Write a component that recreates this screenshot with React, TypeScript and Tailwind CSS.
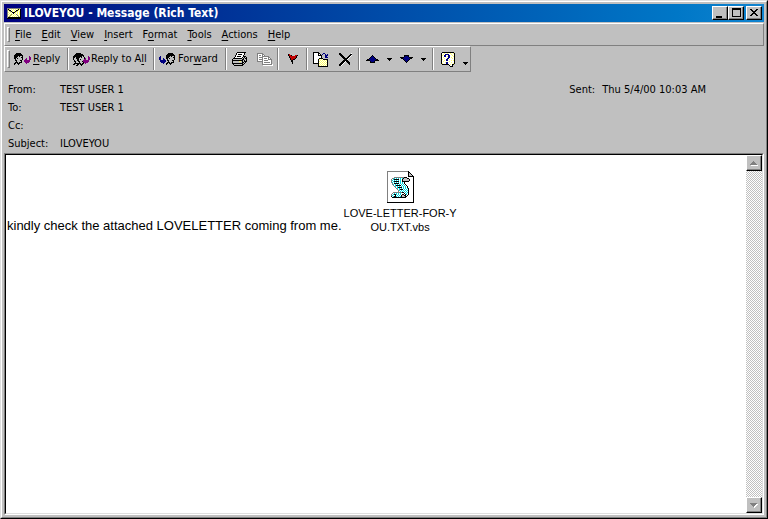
import type { ReactNode } from 'react';

const PALETTE: Record<string, string> = {
  K: '#000000',
  W: '#ffffff',
  G: '#808080',
  L: '#c0c0c0',
  P: '#800080',
  B: '#000080',
  R: '#c00000',
  Y: '#ffff66',
  C: '#00d8e0',
};

const REPLY = [
  '..KKKKK..........',
  '.KKKKKKK.........',
  'KKKKKKKKK........',
  'KKKKLKLLK......P.',
  'KKKLLLLKK......PP',
  'KKLKLLLLK...P..PP',
  '.KLLLLLLK..PP..PP',
  '.KKLLLKK..PPPPPP.',
  '..KLLLLK..PPPPPP.',
  '.KKKLKKK...PPPP..',
  'KK.KKK......P....',
  'K...K............',
];

const REPLY_ALL = [
  '...KKKKK.........',
  '..KKKKKKKK.......',
  '.KKKKKKKKKK......',
  'KKKKKKKKKLK....P.',
  'KKLKKKKLKLLK...PP',
  'KLLKKKLLLLLKP..PP',
  'KLLLKKLKLLLPP..PP',
  '.KLLKKLLLLPPPPPP.',
  '.KKLLKKLLKPPPPPP.',
  '..KLLLKLLLKPPPP..',
  '.KKKKKKKLKK.P....',
  'KK..KK.KKK.......',
  '...KK...K........',
];

const FORWARD = [
  '.........KKKKK...',
  '........KKKKKKK..',
  '.......KKKKKKKKK.',
  '.B.....KKKKLKLLK.',
  'BB.....KKKLLLLKK.',
  'BB..B..KKLKLLLLK.',
  'BB..BB..KLLLLLLK.',
  '.BBBBBB.KKLLLKK..',
  '.BBBBBB..KLLLLK..',
  '..BBBB..KKKLKKK..',
  '....B..KK.KKK....',
  '.......K...K.....',
];

const PRINTER = [
  '.....KKKKKKKKK..',
  '....KWWWWWWWK...',
  '....KWKKKKWWK...',
  '...KWWWWWWWK....',
  '...KWKKKKWWKKK..',
  '..KWWWWWWWKLKLK.',
  '.KKKKKKKKKLKLKK.',
  'KLLLLLLLLLKKLLK.',
  'KKKKKKKKKKKLKLK.',
  'KLLLLLLYYLKLKKK.',
  'KLLLLLLLLLKKLK..',
  'KKKKKKKKKKKLK...',
  '.KLLLLLLLLKK....',
  '..KKKKKKKKK.....',
];

const COPY = [
  'GGGGGG..........',
  'GWWWWGG.........',
  'GWGGWGWG........',
  'GWWWWGGGGGGG....',
  'GWGGGGWWWWWGG...',
  'GWWWWGWGGGWGWG..',
  'GWGGGGWWWWWGGGG.',
  'GWWWWGWGGGGWWWG.',
  'GGGGGGWWWWWWWWG.',
  '.....GWGGGGGGWG.',
  '.....GWWWWWWWWG.',
  '.....GGGGGGGGGGW',
  '......WWWWWWWWWW',
];

const FLAG = [
  'KR........',
  'KRRK...RRK',
  '.KRRRRRRK.',
  '.KRRRRRRK.',
  '..KRRRRK..',
  '..KRRKK...',
  '...KK.....',
  '...KK.....',
  '....K.....',
  '....K.....',
];

const MOVE = [
  'KKKKKK..........',
  'KWWWWKK...BB....',
  'KWWWWKWK.B..B.B.',
  'KWWWWKKKK...BBB.',
  'KWWWWWWWK...BB..',
  'KWWWWWWWK...BBB.',
  'KWWWWWKKKK......',
  'KWWWWKYWYWKKKKK.',
  'KWWWWKWYWYWYWYK.',
  'KWWWWKYWYWYWYWK.',
  'KWWWWKWYWYWYWYK.',
  'KKKKKKYWYWYWYWK.',
  '.....KWYWYWYWYK.',
  '.....KYWYWYWYWK.',
  '.....KKKKKKKKKK.',
];

const DELETE = [
  'KK..........W.',
  'KKK........KK.',
  '.KKK......KKW.',
  '..KKK....KKW..',
  '...KKK..KKW...',
  '....KKKKKW....',
  '.....KKKW.....',
  '....KKKKK.....',
  '...KKKWKKK....',
  '..KKKW..KKK...',
  '.KKKW....KK...',
  'KKKW......K...',
  'KKW...........',
];

const ARROW_UP = [
  '......K......',
  '.....KBK.....',
  '....KBBBK....',
  '...KBBBBBK...',
  '.KKBBBBBBBKK.',
  'KKKKBBBBBKKKK',
  '....KBBBK....',
  '....KKKKK....',
];

const ARROW_DOWN = [...ARROW_UP].reverse();

const CARET = ['KKKKK', '.KKK.', '..K..'];

const HELP = [
  '.KKKKKKKKKKKK.',
  'KWWYWWYWWYWWYK',
  'KWYWBBBBWWYWWK',
  'KYWBBWWBBWWYWK',
  'KWWBBWYBBWWWYK',
  'KWYWWWWBBWYWWK',
  'KWWYWWBBWWWYWK',
  'KYWWWBBWYWWWWK',
  'KWWYWBBWWWYWYK',
  'KWYWWWWWYWWWWK',
  'KWWWYBBWWWYWWK',
  'KYWWWBBWWWWWYK',
  '.KKKKKKKWYWKK.',
  '........KWWK..',
  '.........KKK..',
];

const ENVELOPE = [
  'GGGGGGGGGGGGGG',
  'GKYWYWYWYWYKYK',
  'GYKKWYWYWKKYWK',
  'GWYGKYWYKGYWYK',
  'GYWYWKKKYWYWYK',
  'GWYWYWKWYWYWYK',
  'GYWYGYWYWGYWYK',
  'GWYGYWYWYWGYWK',
  'GYGYWYWYWYWGYK',
  'GKKKKKKKKKKKKK',
  'KKKKKKKKKKKKKK',
];

const MINIMIZE = ['KKKKKK', 'KKKKKK'];

const MAXIMIZE = [
  'KKKKKKKKK',
  'KKKKKKKKK',
  'K.......K',
  'K.......K',
  'K.......K',
  'K.......K',
  'K.......K',
  'K.......K',
  'KKKKKKKKK',
];

const CLOSE = [
  'KK....KK',
  '.KK..KK.',
  '..KKKK..',
  '...KK...',
  '..KKKK..',
  '.KK..KK.',
  'KK....KK',
];

const SCROLL_UP = [
  '...G....',
  '..GGG...',
  '.GGGGG..',
  'GGGGGGG.',
  '.WWWWWWW',
];

const SCROLL_DOWN = [
  'GGGGGGG.',
  '.GGGGGWW',
  '..GGGWW.',
  '...GWW..',
  '....W...',
];

const SCRIPT_FILE = [
  'GGGGGGGGGGGGGGGGGGGGGK.....',
  'GWWWWWWWWWWWWWWWWWWWWKK....',
  'GWWWWWWWWWWWWWWWWWWWWKLK...',
  'GWWWWWWWWWWWWWWWWWWWWKLLK..',
  'GWWWWWWWWWWWWWWWWWWWWKLLLK.',
  'GWWWWWWWWWWWWWWWWWWWWKKKKKK',
  'GWWWWWWGGGGGGGGGGKKKWWWWWWK',
  'GWWWWGGCWCWCWCWCKLLLKKWWWWK',
  'GWWWGWCKKKKKWCWKLLLLLLKWWWK',
  'GWWWGCWCWCWCWCWKLLLLLLKWWWK',
  'GWWWGWCKKKKKWCWKKKKKKKWWWWK',
  'GWWWGCWCWCWCWCWCWKWWWWWWWWK',
  'GWWWWGWKKKKKWCWCWKWWWWWWWWK',
  'GWWWWGCWCWCWCWCWCWKWWWWWWWK',
  'GWWWWWGWCKKKKKWCWCWKWWWWWWK',
  'GWWWWWWGCWCWCWCWCWCWKWWWWWK',
  'GWWWWWWWGWCKKKKWCWCWKWWWWWK',
  'GWWWWWWWWGCWCWCWCWCWCKWWWWK',
  'GWWWWWWWWWGWCKKKWCWCWKWWWWK',
  'GWWWWWWWWWWGCWCWCWCWCKWWWWK',
  'GWWWWWWWWWWGWCWCWCWCWKWWWWK',
  'GWWWWWGGGGGGGGGKKWCWCKWWWWK',
  'GWWWWGWCWCWCWCWWWKWCWKWWWWK',
  'GWWWGWCKKCWCWCWKKWKCWKWWWWK',
  'GWWWGCWWKWCWCWKLLKKWKWWWWWK',
  'GWWWKWCKKCWCWCKLLLKKWWWWWWK',
  'GWWWWKKKKKKKKKKKKKKWWWWWWWK',
  'GWWWWWWWWWWWWWWWWWWWWWWWWWK',
  'GWWWWWWWWWWWWWWWWWWWWWWWWWK',
  'GWWWWWWWWWWWWWWWWWWWWWWWWWK',
  'GWWWWWWWWWWWWWWWWWWWWWWWWWK',
  'KKKKKKKKKKKKKKKKKKKKKKKKKKK',
];

// Draws a bitmap: one character per pixel, dots are transparent
function PixelIcon({ rows }: { rows: string[] }) {
  const width = rows[0].length;

  return (
    <svg
      width={width}
      height={rows.length}
      viewBox={`0 0 ${width} ${rows.length}`}
      shapeRendering="crispEdges"
      className="block shrink-0"
      aria-hidden="true"
    >
      {rows.map((row, y) =>
        [...row].map((c, x) =>
          PALETTE[c] ? (
            <rect key={`${x}-${y}`} x={x} y={y} width="1" height="1" fill={PALETTE[c]} />
          ) : null
        )
      )}
    </svg>
  );
}

const raised =
  'flex items-center justify-center bg-[#c0c0c0] border border-t-white border-l-white border-r-black border-b-black shadow-[inset_-1px_-1px_0_#808080]';

function Grip() {
  return (
    <div className="w-[3px] self-stretch my-[2px] shrink-0 border border-t-white border-l-white border-r-[#808080] border-b-[#808080]" />
  );
}

function Separator() {
  return (
    <div className="w-[2px] self-stretch shrink-0 border-l border-l-[#808080] border-r border-r-white" />
  );
}

function ToolButton({
  label,
  className,
  children,
}: {
  label?: string;
  className: string;
  children: ReactNode;
}) {
  return (
    <button
      type="button"
      aria-label={label}
      className={`flex items-center shrink-0 whitespace-nowrap ${className}`}
    >
      {children}
    </button>
  );
}

const menus = [
  ['', 'F', 'ile'],
  ['', 'E', 'dit'],
  ['', 'V', 'iew'],
  ['', 'I', 'nsert'],
  ['F', 'o', 'rmat'],
  ['', 'T', 'ools'],
  ['', 'A', 'ctions'],
  ['', 'H', 'elp'],
];

const fields = [
  { name: 'From:', value: 'TEST USER 1' },
  { name: 'To:', value: 'TEST USER 1' },
  { name: 'Cc:', value: '' },
  { name: 'Subject:', value: 'ILOVEYOU' },
];

function TitleBar() {
  return (
    <header className="h-[18px] shrink-0 flex items-center gap-[3px] pl-[3px] pr-[2px] bg-linear-to-r from-[#000080] to-[#1084d0]">
      <PixelIcon rows={ENVELOPE} />
      <h1 className="flex-1 text-[12px] leading-[18px] font-bold text-white whitespace-nowrap">
        ILOVEYOU - Message (Rich Text)
      </h1>
      <div className="flex">
        <button type="button" aria-label="Minimize" className={`${raised} w-4 h-[14px] pt-[7px] pr-[2px]`}>
          <PixelIcon rows={MINIMIZE} />
        </button>
        <button type="button" aria-label="Maximize" className={`${raised} w-4 h-[14px] pb-px`}>
          <PixelIcon rows={MAXIMIZE} />
        </button>
        <button type="button" aria-label="Close" className={`${raised} w-4 h-[14px] ml-[2px] pb-px`}>
          <PixelIcon rows={CLOSE} />
        </button>
      </div>
    </header>
  );
}

function MenuBar() {
  return (
    <nav className="mt-px h-[23px] shrink-0 flex items-center pl-[2px] py-px border border-t-white border-l-white border-r-[#808080] border-b-[#808080]">
      <Grip />
      <div className="flex pt-[2px]">
        {menus.map(([before, key, after]) => (
          <button key={key + after} type="button" className="px-[5px]">
            {before}
            <span className="underline underline-offset-2">{key}</span>
            {after}
          </button>
        ))}
      </div>
    </nav>
  );
}

function ToolBar() {
  return (
    <div
      role="toolbar"
      className="self-start h-[26px] shrink-0 flex items-center pl-[2px] py-px border border-t-white border-l-white border-r-[#808080] border-b-[#808080]"
    >
      <Grip />
      <ToolButton className="w-[57px] pl-[4px] gap-[2px]">
        <PixelIcon rows={REPLY} />
        <span>
          <span className="underline underline-offset-2">R</span>eply
        </span>
      </ToolButton>
      <Separator />
      <ToolButton className="w-[84px] pl-[4px] gap-px">
        <PixelIcon rows={REPLY_ALL} />
        <span>
          Reply to A<span className="underline underline-offset-2">l</span>l
        </span>
      </ToolButton>
      <Separator />
      <ToolButton className="w-[70px] pl-[4px] gap-[2px]">
        <PixelIcon rows={FORWARD} />
        <span>
          For<span className="underline underline-offset-2">w</span>ard
        </span>
      </ToolButton>
      <Separator />
      <ToolButton label="Print" className="w-[25px] justify-center">
        <PixelIcon rows={PRINTER} />
      </ToolButton>
      <ToolButton label="Copy" className="w-[25px] justify-center">
        <PixelIcon rows={COPY} />
      </ToolButton>
      <Separator />
      <ToolButton label="Flag for Follow Up" className="w-[27px] justify-center">
        <PixelIcon rows={FLAG} />
      </ToolButton>
      <Separator />
      <ToolButton label="Move to Folder" className="w-[25px] justify-center">
        <PixelIcon rows={MOVE} />
      </ToolButton>
      <ToolButton label="Delete" className="w-[25px] justify-center">
        <PixelIcon rows={DELETE} />
      </ToolButton>
      <Separator />
      <ToolButton label="Previous Item" className="w-[24px] justify-center">
        <PixelIcon rows={ARROW_UP} />
      </ToolButton>
      <ToolButton label="Previous Item options" className="w-[11px] justify-center">
        <PixelIcon rows={CARET} />
      </ToolButton>
      <ToolButton label="Next Item" className="w-[23px] justify-center">
        <PixelIcon rows={ARROW_DOWN} />
      </ToolButton>
      <ToolButton label="Next Item options" className="w-[14px] pl-[3px]">
        <PixelIcon rows={CARET} />
      </ToolButton>
      <Separator />
      <ToolButton label="Help" className="w-[27px] justify-center">
        <PixelIcon rows={HELP} />
      </ToolButton>
      <ToolButton label="More Buttons" className="w-[9px] self-end justify-center pb-[5px]">
        <PixelIcon rows={CARET} />
      </ToolButton>
    </div>
  );
}

function MessageHeader() {
  return (
    <section className="shrink-0 flex justify-between pt-[9px] pl-1 pr-[58px] leading-[18px]">
      <dl>
        {fields.map((field) => (
          <div key={field.name} className="flex h-[18px]">
            <dt className="w-[52px]">{field.name}</dt>
            <dd>{field.value}</dd>
          </div>
        ))}
      </dl>
      <dl className="flex h-[18px]">
        <dt className="w-[33px]">Sent:</dt>
        <dd>Thu 5/4/00 10:03 AM</dd>
      </dl>
    </section>
  );
}

function MessageBody() {
  return (
    <main className="flex-1 min-h-0 flex border border-t-[#808080] border-l-[#808080] border-r-white border-b-white">
      <div className="flex-1 min-w-0 flex border border-t-black border-l-black border-r-[#dfdfdf] border-b-[#dfdfdf]">
        <div className="flex-1 min-w-0 bg-white pl-px pt-4 font-['Liberation_Sans',Arial,sans-serif]">
          <div className="flex items-end gap-[2px]">
            <p className="text-[13px] leading-4">
              kindly check the attached LOVELETTER coming from me.
            </p>
            <button type="button" className="flex flex-col items-center text-[11px] leading-[14px] whitespace-nowrap">
              <PixelIcon rows={SCRIPT_FILE} />
              <span className="mt-[3px]">
                LOVE-LETTER-FOR-Y
                <br />
                OU.TXT.vbs
              </span>
            </button>
          </div>
        </div>
        <div className="w-4 shrink-0 flex flex-col justify-between bg-[repeating-conic-gradient(#c0c0c0_0_25%,#ffffff_0_50%)] bg-[length:2px_2px]">
          <button type="button" aria-label="Scroll up" className={`${raised} h-4`}>
            <PixelIcon rows={SCROLL_UP} />
          </button>
          <button type="button" aria-label="Scroll down" className={`${raised} h-4`}>
            <PixelIcon rows={SCROLL_DOWN} />
          </button>
        </div>
      </div>
    </main>
  );
}

export default function App() {
  return (
    <div className="h-screen flex flex-col border border-t-[#dfdfdf] border-l-[#dfdfdf] border-r-black border-b-black bg-[#c0c0c0] text-black text-[11px] font-['DejaVu_Sans_Condensed','Noto_Sans',sans-serif]">
      <div className="flex-1 min-h-0 flex flex-col p-[2px] border border-t-white border-l-white border-r-[#808080] border-b-[#808080]">
        <TitleBar />
        <MenuBar />
        <ToolBar />
        <MessageHeader />
        <MessageBody />
      </div>
    </div>
  );
}
